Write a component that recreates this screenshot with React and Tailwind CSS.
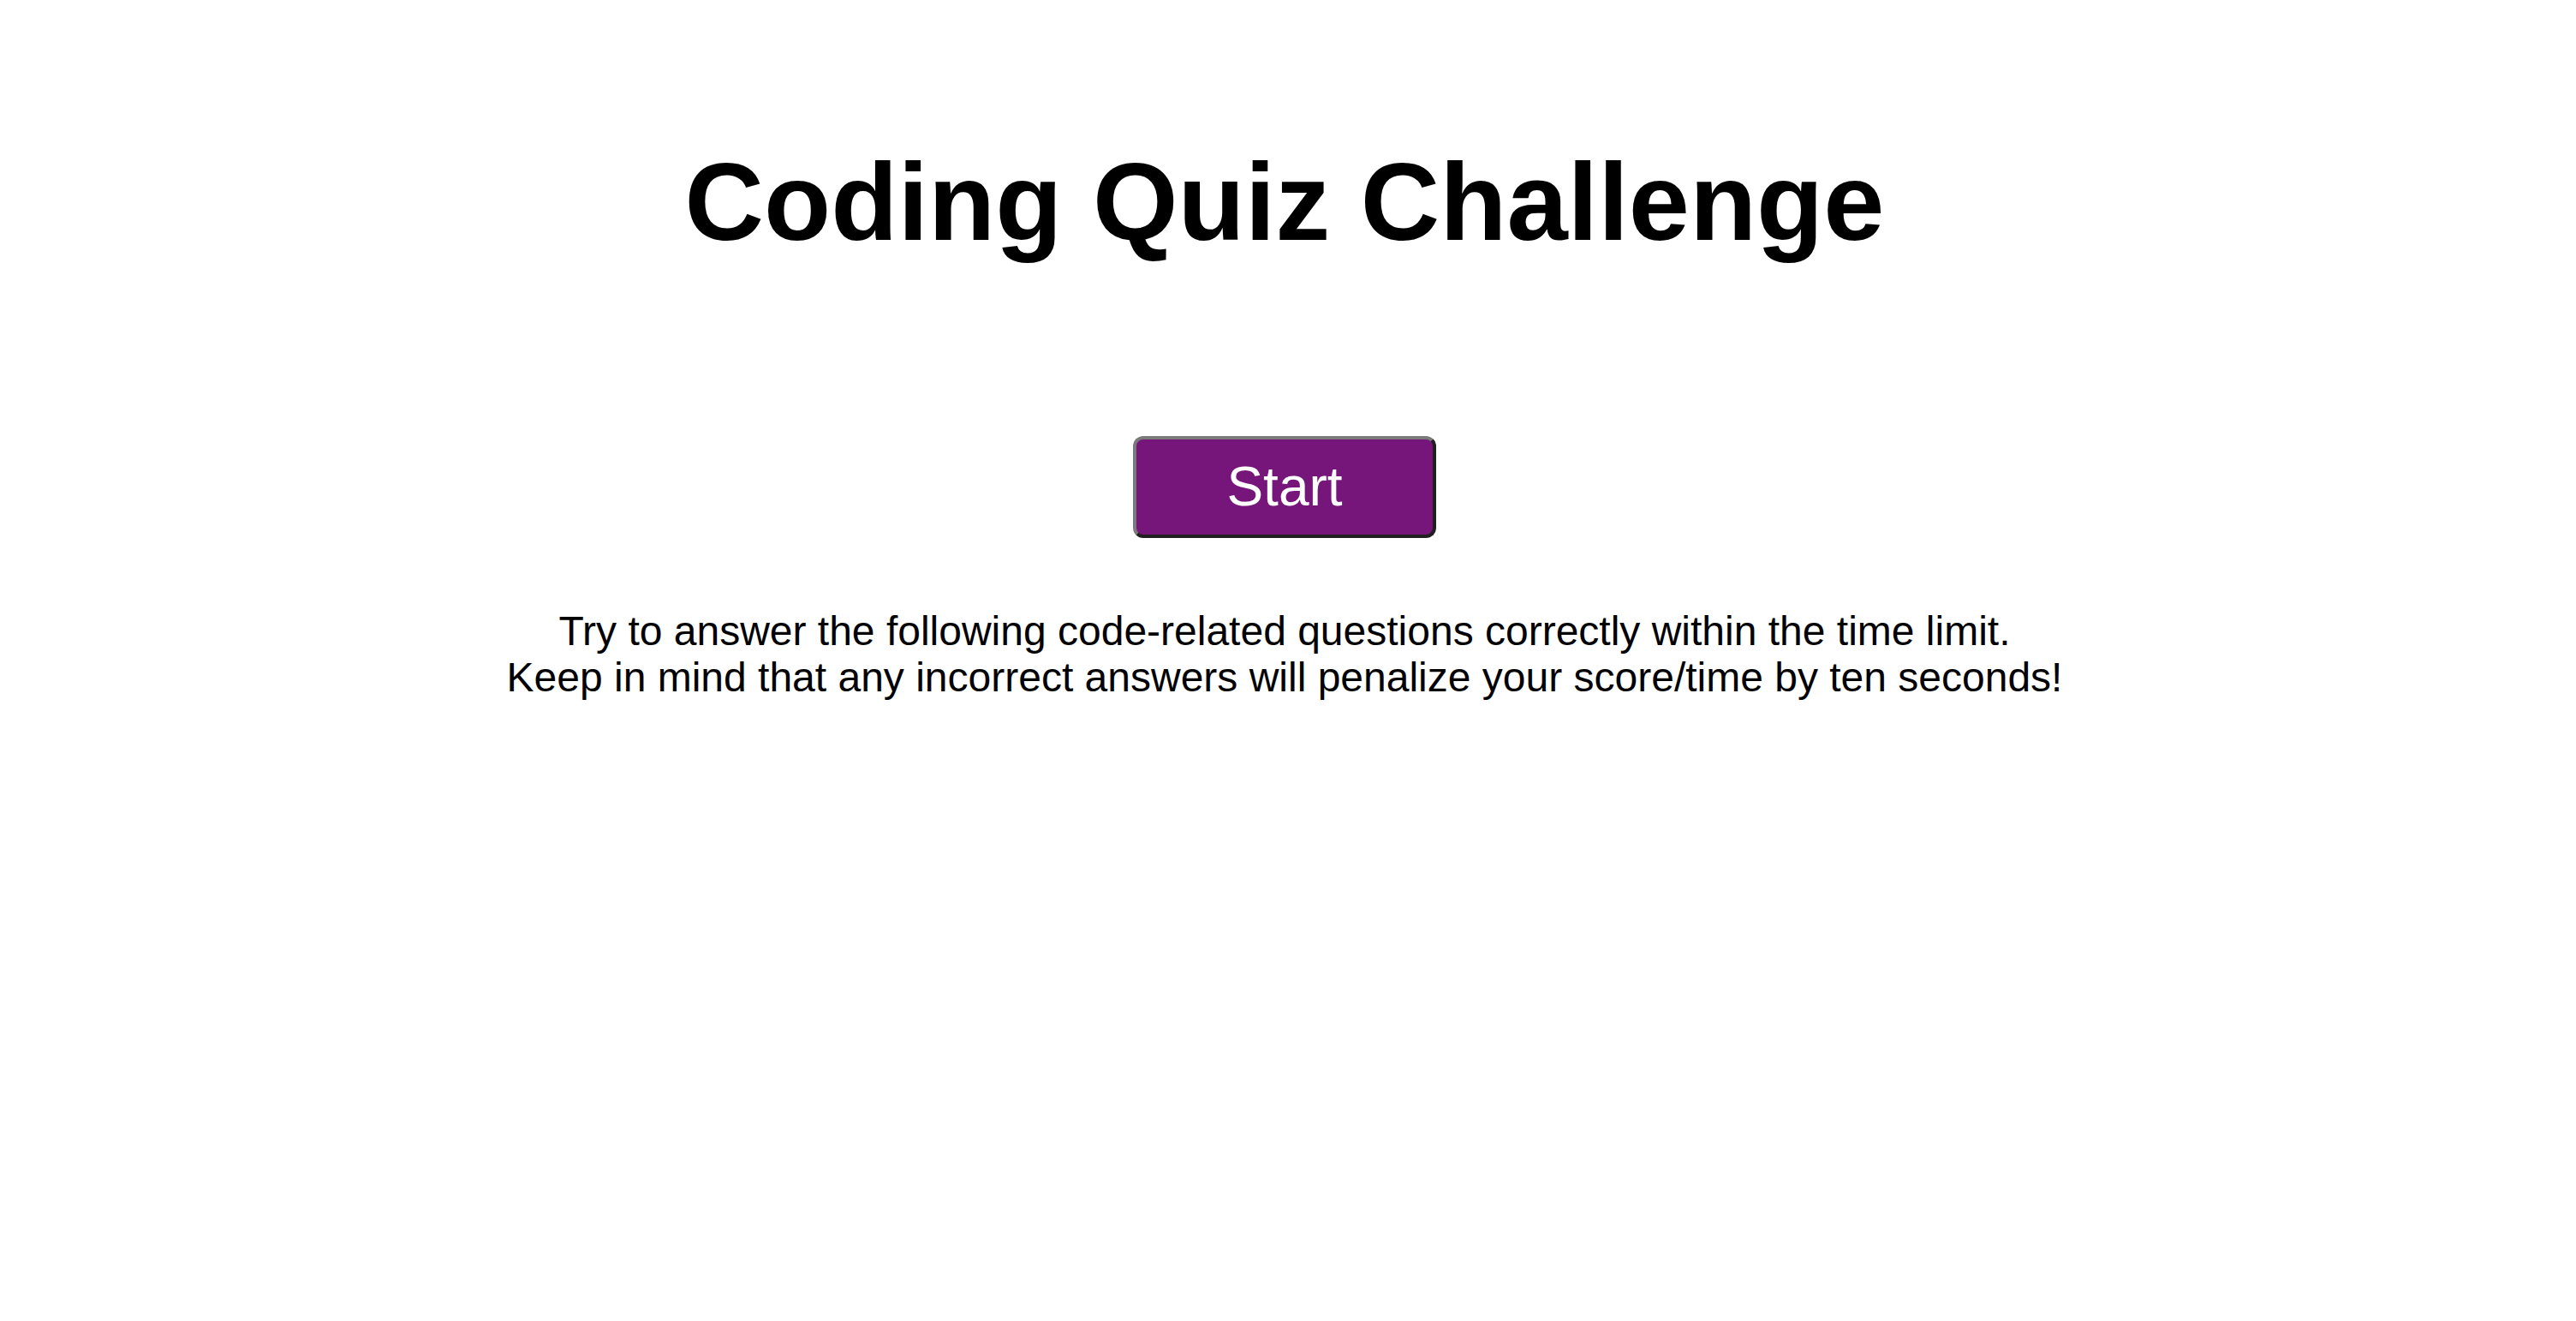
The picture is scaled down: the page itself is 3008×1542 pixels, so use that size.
import React from 'react';

export default function App() {
  return (
    <div className="min-h-screen bg-white text-black font-['Liberation_Sans',Arial,sans-serif]">
      <main className="flex flex-col items-center pt-[162px] pr-2">
        {/* Title */}
        <h1 className="text-[128px] font-bold leading-[1.15]">Coding Quiz Challenge</h1>

        {/* Start button */}
        <button
          type="button"
          className="mt-[200px] w-[354px] h-[119px] rounded-[12px] border-4 border-t-[#7a7a7a] border-l-[#7a7a7a] border-b-[#1f1f1f] border-r-[#1f1f1f] bg-[#76167a] text-white text-[64px] leading-[1.15]"
        >
          Start
        </button>

        {/* Instructions */}
        <p className="mt-[82px] text-center text-[48px] leading-[54px]">
          Try to answer the following code-related questions correctly within the time limit.
          <br />
          Keep in mind that any incorrect answers will penalize your score/time by ten seconds!
        </p>
      </main>
    </div>
  );
}
